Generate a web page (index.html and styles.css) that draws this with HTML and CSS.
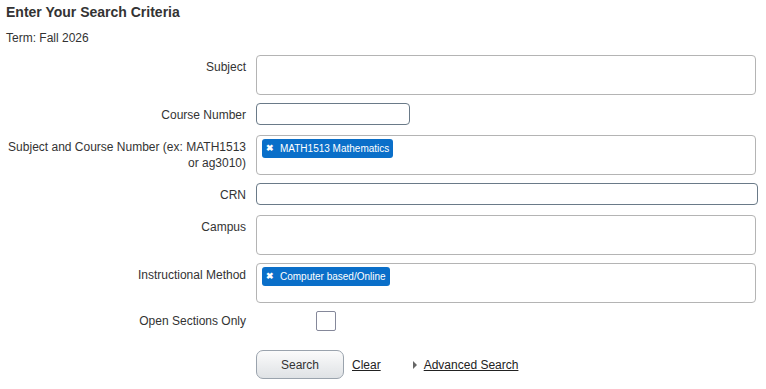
FILE: index.html
```html
<!DOCTYPE html>
<html>
<head>
<meta charset="utf-8">
<link rel="stylesheet" href="styles.css">
</head>
<body>
<div class="page">
  <h1 class="title">Enter Your Search Criteria</h1>
  <div class="term">Term: Fall 2026</div>
  <div class="form">
    <div class="row">
      <label class="lbl">Subject</label>
      <div class="multi"></div>
    </div>
    <div class="row row-text">
      <label class="lbl">Course Number</label>
      <input class="txt txt-short" type="text">
    </div>
    <div class="row">
      <label class="lbl">Subject and Course Number (ex: MATH1513 or ag3010)</label>
      <div class="multi"><span class="tag"><span class="tag-x">&#10006;</span>MATH1513 Mathematics</span></div>
    </div>
    <div class="row row-text">
      <label class="lbl">CRN</label>
      <input class="txt txt-long" type="text">
    </div>
    <div class="row">
      <label class="lbl">Campus</label>
      <div class="multi"></div>
    </div>
    <div class="row">
      <label class="lbl">Instructional Method</label>
      <div class="multi"><span class="tag"><span class="tag-x">&#10006;</span>Computer based/Online</span></div>
    </div>
    <div class="row row-check">
      <label class="lbl lbl-check">Open Sections Only</label>
      <span class="check"></span>
    </div>
    <div class="actions">
      <button class="btn" type="button">Search</button>
      <a class="link" href="#">Clear</a>
      <span class="adv"><span class="tri"></span><a class="link" href="#">Advanced Search</a></span>
    </div>
  </div>
</div>
</body>
</html>
```
FILE: styles.css
```css
html, body {
  margin: 0;
  padding: 0;
  background: #fff;
}
body {
  font-family: "Liberation Sans", Arial, sans-serif;
  color: #333;
  font-size: 12px;
}
.page {
  padding: 4px 6px 0 6px;
}
.title {
  font-size: 14px;
  font-weight: bold;
  margin: 0;
  line-height: 16px;
  color: #333;
}
.term {
  margin-top: 11px;
  line-height: 14px;
  font-size: 12px;
}
.form {
  margin-top: 10px;
  display: flex;
  flex-direction: column;
}
.row {
  display: flex;
  align-items: flex-start;
  gap: 10px;
  margin-bottom: 8px;
}
.row-text {
  margin-bottom: 10px;
}
.lbl {
  width: 240px;
  text-align: right;
  padding-top: 4px;
  line-height: 16px;
  font-size: 12px;
  color: #333;
}
.multi {
  width: 500px;
  height: 40px;
  box-sizing: border-box;
  border: 1px solid #b4b4b4;
  border-radius: 4px;
  background: #fff;
  padding: 3px 5px;
}
.tag {
  display: inline-flex;
  align-items: center;
  height: 19px;
  box-sizing: border-box;
  background: #0a6fc9;
  color: #fff;
  border-radius: 3px;
  padding: 0 4px 0 4px;
  font-size: 10px;
  line-height: 19px;
  vertical-align: top;
}
.tag-x {
  font-size: 9px;
  font-weight: bold;
  margin-right: 6px;
}
.txt {
  display: block;
  margin: 0;
  height: 22px;
  box-sizing: border-box;
  border: 1px solid #6a7a88;
  border-radius: 4px;
  background: #fff;
  padding: 0 4px;
  font-family: inherit;
  font-size: 12px;
  outline: none;
}
.txt-short {
  width: 154px;
}
.txt-long {
  width: 502px;
}
.row-check {
  align-items: center;
  margin-bottom: 19px;
}
.lbl-check {
  padding-top: 0;
}
.check {
  display: block;
  margin-left: 60px;
  width: 20px;
  height: 20px;
  box-sizing: border-box;
  border: 1px solid #85889a;
  border-radius: 2px;
  background: #fff;
}
.actions {
  display: flex;
  align-items: center;
  padding-left: 250px;
}
.btn {
  width: 88px;
  height: 29px;
  box-sizing: border-box;
  border: 1px solid #9aa3ad;
  border-radius: 7px;
  background: linear-gradient(#fbfbfb, #dfe2e5);
  font-family: inherit;
  font-size: 12px;
  color: #333;
  padding: 0;
  margin-right: 8px;
}
.link {
  color: #222;
  text-decoration: underline;
  font-size: 12px;
}
.adv {
  display: inline-flex;
  align-items: center;
  margin-left: 32px;
}
.tri {
  display: inline-block;
  width: 0;
  height: 0;
  border-top: 4px solid transparent;
  border-bottom: 4px solid transparent;
  border-left: 4px solid #666;
  margin-right: 7px;
}
```
